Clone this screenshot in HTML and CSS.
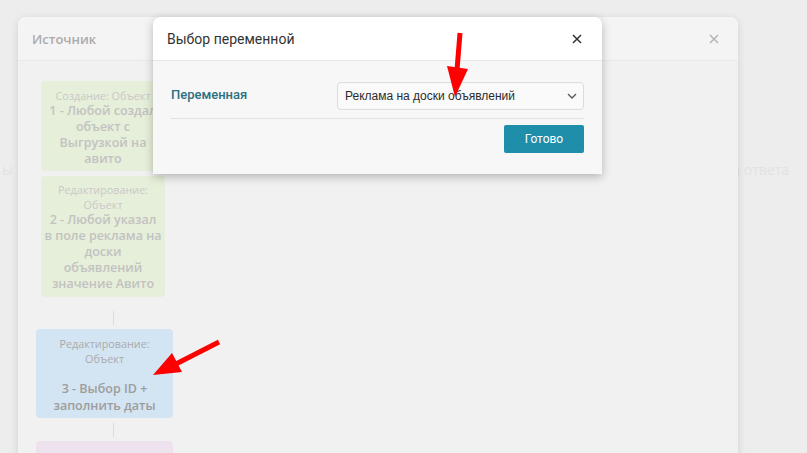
FILE: index.html
```html
<!DOCTYPE html>
<html lang="ru">
<head>
  <meta charset="UTF-8" />
  <title>Выбор переменной</title>
  <link rel="stylesheet" href="styles.css">
</head>
<body>
  <div class="page">
    <div class="page-row">
      <span>ы</span>
      <span>а ответа</span>
    </div>
  </div>

  <div class="source-modal">
    <div class="source-head">
      <span class="source-title">Источник</span>
      <svg class="source-close" width="10" height="10" viewBox="0 0 10 10"><path d="M1 1L9 9M9 1L1 9" stroke="#b0b0b0" stroke-width="1.4" fill="none"/></svg>
    </div>
    <div class="source-body">
      <div class="chain">
        <div class="card card-green card-faded card-narrow card-first">
          <div class="card-label">Создание: Объект</div>
          <div class="card-title">1 - Любой создал<br>объект с<br>Выгрузкой на<br>авито</div>
        </div>
        <div class="card card-green card-faded card-narrow card-second">
          <div class="card-label">Редактирование:<br>Объект</div>
          <div class="card-title">2 - Любой указал<br>в поле реклама на<br>доски<br>объявлений<br>значение Авито</div>
        </div>
        <div class="link"></div>
        <div class="card card-blue">
          <div class="card-label">Редактирование:<br>Объект</div>
          <div class="card-title card-title-gap">3 - Выбор ID +<br>заполнить даты</div>
        </div>
        <div class="link link-short"></div>
        <div class="card card-purple">
          <div class="card-label">&nbsp;</div>
        </div>
      </div>
    </div>
  </div>

  <div class="var-modal">
    <div class="var-head">
      <span class="var-title">Выбор переменной</span>
      <svg class="var-close" width="10" height="10" viewBox="0 0 10 10"><path d="M1 1L9 9M9 1L1 9" stroke="#333" stroke-width="1.5" fill="none"/></svg>
    </div>
    <div class="var-body">
      <div class="var-row">
        <label class="var-label">Переменная</label>
        <div class="var-select">
          <span>Реклама на доски объявлений</span>
          <svg width="10" height="6" viewBox="0 0 10 6"><path d="M1 1L5 5L9 1" stroke="#555" stroke-width="1.3" fill="none"/></svg>
        </div>
      </div>
      <div class="var-actions">
        <button class="btn-done">Готово</button>
      </div>
    </div>
  </div>

  <svg class="arrows" width="807" height="453" viewBox="0 0 807 453">
    <path d="M460 33 L457 70" stroke="#ff0000" stroke-width="5" fill="none"/>
    <polygon points="447,66 468,69 455,97" fill="#ff0000"/>
    <path d="M219 342 L172 366" stroke="#ff0000" stroke-width="5" fill="none"/>
    <polygon points="172,353 182,372 153,375" fill="#ff0000"/>
  </svg>
</body>
</html>
```

FILE: styles.css
```css
* {
  margin: 0;
  padding: 0;
  box-sizing: border-box;
}

body {
  width: 807px;
  height: 453px;
  overflow: hidden;
  background: #ededed;
  font-family: 'Open Sans', sans-serif;
  position: relative;
}

.page {
  padding-top: 160px;
}

.page-row {
  display: flex;
  justify-content: space-between;
  padding: 0 18px 0 2px;
  font-size: 14px;
  color: #e2e2e2;
}

/* source modal (behind) */
.source-modal {
  position: absolute;
  top: 17px;
  left: 18px;
  width: 720px;
  height: 460px;
  border-radius: 8px;
  background: #f1f1f1;
  box-shadow: 0 2px 8px rgba(0, 0, 0, 0.12);
  overflow: hidden;
}

.source-head {
  height: 44px;
  background: #f4f4f4;
  border-bottom: 1px solid #e9e9e9;
  display: flex;
  align-items: center;
  justify-content: space-between;
  padding: 0 19px 0 14px;
}

.source-title {
  font-size: 13px;
  font-weight: 600;
  color: #ababab;
}

.source-body {
  padding: 20px 0 0 18px;
}

.chain {
  width: 137px;
  display: flex;
  flex-direction: column;
  align-items: center;
}

.card {
  width: 137px;
  border-radius: 4px;
  text-align: center;
  padding: 8px 0;
  white-space: nowrap;
}

.card-narrow {
  width: 124px;
  margin-right: 3px;
}

.card-green {
  background: #e6efd9;
}

.card-first {
  height: 90px;
  padding-top: 7px;
  display: flex;
  flex-direction: column;
  align-items: center;
}

.card-second {
  margin-top: 5px;
  height: 121px;
  padding-top: 6px;
}

.card-blue {
  background: #d3e4f2;
  height: 89px;
  padding-top: 7px;
}

.card-purple {
  background: #eee2ef;
  height: 40px;
}

.card-label {
  font-size: 10.8px;
  line-height: 15px;
  color: #ababab;
}

.card-title {
  font-size: 12.5px;
  font-weight: 600;
  line-height: 16px;
  color: #9d9d9d;
}

.card-title-gap {
  margin-top: 14px;
  line-height: 17px;
}

.card-faded .card-label {
  color: #c9c9c9;
}

.card-faded .card-title {
  color: #c2c2c2;
}

.link {
  width: 1px;
  height: 14px;
  background: #dcdcdc;
  margin: 14px 0 4px 17px;
}

.link-short {
  margin: 5px 0 4px 17px;
}

/* variable modal (front) */
.var-modal {
  position: absolute;
  top: 17px;
  left: 153px;
  width: 449px;
  height: 157px;
  border-radius: 8px 8px 0 0;
  background: #f7f7f7;
  box-shadow: 0 3px 10px rgba(0, 0, 0, 0.25);
  font-family: Roboto, sans-serif;
  overflow: hidden;
}

.var-head {
  height: 44px;
  background: #fff;
  border-bottom: 1px solid #e6e6e6;
  display: flex;
  align-items: center;
  justify-content: space-between;
  padding: 0 20px 0 14px;
}

.var-title {
  font-size: 14px;
  color: #333;
}

.var-body {
  padding: 21px 18px 0 18px;
}

.var-row {
  display: flex;
  align-items: center;
  padding-bottom: 8px;
  border-bottom: 1px solid #e2e2e2;
}

.var-label {
  width: 166px;
  font-size: 13px;
  font-weight: 500;
  color: #2c6f80;
  margin-top: -3px;
}

.var-select {
  flex: 1;
  height: 28px;
  border: 1px solid #dcdcdc;
  border-radius: 4px;
  background: #fafafa;
  display: flex;
  align-items: center;
  justify-content: space-between;
  padding: 0 6px 0 7px;
  font-family: 'Liberation Sans', Arial, sans-serif;
  font-size: 12px;
  color: #2b2b2b;
}

.var-actions {
  display: flex;
  justify-content: flex-end;
  padding-top: 6px;
}

.btn-done {
  width: 80px;
  height: 28px;
  border: none;
  border-radius: 2px;
  background: #1f8eab;
  color: #fff;
  font-family: Roboto, sans-serif;
  font-size: 12px;
}

.arrows {
  position: absolute;
  top: 0;
  left: 0;
  pointer-events: none;
}
```
